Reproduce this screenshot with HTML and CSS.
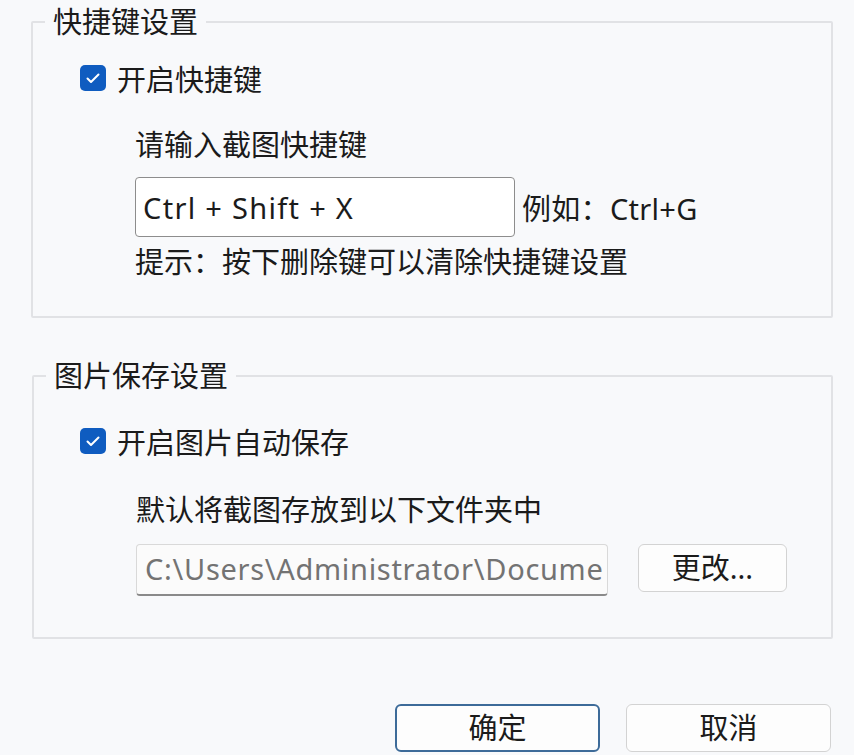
FILE: index.html
```html
<!DOCTYPE html>
<html lang="zh-CN">
<head>
  <meta charset="UTF-8">
  <meta name="viewport" content="width=device-width, initial-scale=1.0">
  <title>设置</title>
  <link rel="stylesheet" href="styles.css">
</head>
<body>
  <div class="dialog">
    <fieldset class="group group-keys">
      <legend>快捷键设置</legend>
      <label class="check-row">
        <span class="check">
          <svg width="26" height="26" viewBox="0 0 26 26"><rect x="0" y="0" width="26" height="26" rx="5" fill="#0f5cc0"/><path d="M7.5 13.5 L11 17 L18.5 9.5" fill="none" stroke="#fff" stroke-width="2" stroke-linecap="round" stroke-linejoin="round"/></svg>
        </span>
        开启快捷键
      </label>
      <div class="sub">
        <p class="sub-label">请输入截图快捷键</p>
        <div class="key-row">
          <div class="key-input">Ctrl + Shift + X</div>
          <span class="example">例如：Ctrl+G</span>
        </div>
        <p class="hint">提示：按下删除键可以清除快捷键设置</p>
      </div>
    </fieldset>

    <fieldset class="group group-save">
      <legend>图片保存设置</legend>
      <label class="check-row">
        <span class="check">
          <svg width="26" height="26" viewBox="0 0 26 26"><rect x="0" y="0" width="26" height="26" rx="5" fill="#0f5cc0"/><path d="M7.5 13.5 L11 17 L18.5 9.5" fill="none" stroke="#fff" stroke-width="2" stroke-linecap="round" stroke-linejoin="round"/></svg>
        </span>
        开启图片自动保存
      </label>
      <div class="sub">
        <p class="sub-label">默认将截图存放到以下文件夹中</p>
        <div class="path-row">
          <div class="path-input"><span class="path-text">C:\Users\Administrator\Documents</span></div>
          <button class="btn btn-change">更改...</button>
        </div>
      </div>
    </fieldset>

    <div class="actions">
      <button class="btn btn-ok">确定</button>
      <button class="btn">取消</button>
    </div>
    <div class="bottom-line"></div>
  </div>
</body>
</html>
```

FILE: styles.css
```css
* { box-sizing: border-box; }
body { margin: 0; background: #f8f9fb; color: #1b1b1b; font-family: "Noto Sans", "Noto Sans CJK SC", sans-serif; font-size: 29px; }
p { margin: 0; }
.dialog { width: 854px; height: 755px; overflow: hidden; }

.group { margin: 0 21px 0 31px; padding: 0; border: 2px solid #e1e2e5; border-radius: 2px; }
.group-keys { margin-top: 4px; padding-bottom: 36px; }
.group-save { margin-top: 40px; margin-left: 32px; padding-bottom: 41px; }
legend { margin-left: 12px; padding: 0 8px; line-height: 36px; }

.check-row { display: flex; align-items: center; gap: 11px; height: 36px; margin-left: 47px; margin-top: 20px; }
.group-save .check-row { margin-top: 29px; margin-left: 46px; }
.check { display: flex; width: 26px; height: 26px; }

.sub { padding-left: 102px; }
.sub-label { line-height: 36px; margin-top: 31px; }
.group-save .sub-label { margin-top: 33px; }

.key-row { display: flex; align-items: center; margin-top: 14px; }
.key-input { width: 380px; height: 60px; padding-left: 7px; display: flex; align-items: center; letter-spacing: 1.3px; background: #fff; border: 1.5px solid #8d8d8d; border-radius: 4px; }
.example { margin-left: 7px; letter-spacing: 0.3px; }
.hint { line-height: 36px; margin-top: 7px; }

.path-row { display: flex; align-items: flex-start; gap: 30px; margin-top: 16px; }
.path-input { width: 472px; height: 52px; padding-left: 8px; line-height: 48px; overflow: hidden; color: #737373; background: #fbfbfb; border: 1px solid #d9d9d9; border-bottom: 2px solid #8a8a8a; border-radius: 4px; }
.path-text { display: block; width: 460px; white-space: nowrap; overflow: hidden; letter-spacing: 0.7px; }

.btn { font: inherit; color: #1b1b1b; background: #fdfdfd; border: 1.5px solid #d3d3d3; border-radius: 6px; height: 48px; padding: 0; line-height: 44px; }
.btn-change { width: 149px; }

.actions { display: flex; justify-content: flex-end; gap: 26px; margin-top: 65px; padding-right: 23px; }
.actions .btn { width: 205px; }
.btn-ok { border: 2px solid #3d6b99; }

.bottom-line { height: 2px; margin-top: 3px; background: #111; }
```
